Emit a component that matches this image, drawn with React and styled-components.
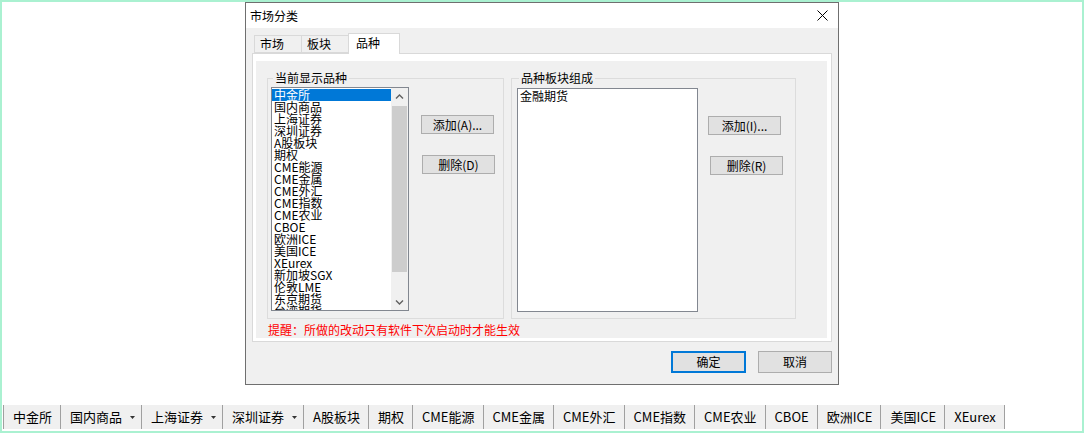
import styled, { createGlobalStyle } from "styled-components";

const GlobalStyle = createGlobalStyle`
  html, body {
    margin: 0;
    padding: 0;
    background: #fff;
  }
  * {
    box-sizing: border-box;
  }
`;

const leftItems = [
  "中金所",
  "国内商品",
  "上海证券",
  "深圳证券",
  "A股板块",
  "期权",
  "CME能源",
  "CME金属",
  "CME外汇",
  "CME指数",
  "CME农业",
  "CBOE",
  "欧洲ICE",
  "美国ICE",
  "XEurex",
  "新加坡SGX",
  "伦敦LME",
  "东京期货",
  "台湾期货",
];

const barItems = [
  { label: "中金所" },
  { label: "国内商品", drop: true },
  { label: "上海证券", drop: true },
  { label: "深圳证券", drop: true },
  { label: "A股板块" },
  { label: "期权" },
  { label: "CME能源" },
  { label: "CME金属" },
  { label: "CME外汇" },
  { label: "CME指数" },
  { label: "CME农业" },
  { label: "CBOE" },
  { label: "欧洲ICE" },
  { label: "美国ICE" },
  { label: "XEurex" },
];

const Chevron = ({ down }) => (
  <svg width="9" height="6" viewBox="0 0 9 6">
    <path
      d={down ? "M1 1.5 L4.5 5 L8 1.5" : "M1 4.5 L4.5 1 L8 4.5"}
      fill="none"
      stroke="#606060"
      strokeWidth="1.4"
    />
  </svg>
);

const ListBox = ({ items, selected, width, scroll }) => (
  <List $width={width}>
    <Items>
      {items.map((item, i) => (
        <Item key={item} $active={i === selected}>
          {item}
        </Item>
      ))}
    </Items>
    {scroll && (
      <ScrollBar>
        <ScrollBtn>
          <Chevron />
        </ScrollBtn>
        <Thumb />
        <Track />
        <ScrollBtn>
          <Chevron down />
        </ScrollBtn>
      </ScrollBar>
    )}
  </List>
);

const App = () => {
  return (
    <Frame>
      <GlobalStyle />
      <Dialog>
        <TitleBar>
          <span>市场分类</span>
          <svg width="11" height="11" viewBox="0 0 11 11">
            <path d="M0.5 0.5 L10.5 10.5 M10.5 0.5 L0.5 10.5" stroke="#000" strokeWidth="1" />
          </svg>
        </TitleBar>
        <Body>
          <TabStrip>
            <Tab>市场</Tab>
            <Tab>板块</Tab>
            <Tab $active>品种</Tab>
          </TabStrip>
          <TabPage>
            <Panel>
              <Groups>
                <Group $width={237} $padX={3} $padTop={2}>
                  <Legend>当前显示品种</Legend>
                  <GroupInner>
                    <ListBox items={leftItems} selected={0} width={138} scroll />
                    <BtnCol $offset={12}>
                      <Button $w={73}>添加(A)...</Button>
                      <Button $w={73} $shift={1}>删除(D)</Button>
                    </BtnCol>
                  </GroupInner>
                </Group>
                <Group $width={285} $padX={5} $padTop={3}>
                  <Legend>品种板块组成</Legend>
                  <GroupInner>
                    <ListBox items={["金融期货"]} selected={-1} width={181} />
                    <BtnCol $offset={10}>
                      <Button $w={73}>添加(I)...</Button>
                      <Button $w={73} $shift={2}>删除(R)</Button>
                    </BtnCol>
                  </GroupInner>
                </Group>
              </Groups>
              <Notice>提醒：所做的改动只有软件下次启动时才能生效</Notice>
            </Panel>
          </TabPage>
          <Footer>
            <Button $w={75} $h={22} $primary>确定</Button>
            <Button $w={74} $h={22}>取消</Button>
          </Footer>
        </Body>
      </Dialog>
      <Bar>
        {barItems.map((b) => (
          <BarItem key={b.label} $drop={b.drop}>
            {b.label}
            {b.drop && (
              <svg width="5" height="3" viewBox="0 0 5 3">
                <path d="M0 0 L5 0 L2.5 3 Z" fill="#333" />
              </svg>
            )}
          </BarItem>
        ))}
      </Bar>
    </Frame>
  );
};

export default App;

const Frame = styled.div`
  position: relative;
  width: 1084px;
  height: 433px;
  border: 2px solid #aaf1d1;
  background: #fff;
  display: flex;
  flex-direction: column;
  justify-content: flex-end;
  padding-bottom: 2px;
  overflow: hidden;
`;

const Dialog = styled.div`
  position: absolute;
  left: 243px;
  top: 0;
  width: 594px;
  height: 383px;
  border: 1px solid #6f6f6f;
  background: #f0f0f0;
  display: flex;
  flex-direction: column;
  font-family: "Noto Sans CJK SC", sans-serif;
  font-size: 12px;
  color: #000;
  z-index: 2;
`;

const TitleBar = styled.div`
  height: 25px;
  flex-shrink: 0;
  background: #fff;
  display: flex;
  align-items: center;
  justify-content: space-between;
  padding: 0 10px 0 4px;
  line-height: 14px;
`;

const Body = styled.div`
  flex: 1;
  display: flex;
  flex-direction: column;
  padding: 5px 6px 11px 6px;
`;

const TabStrip = styled.div`
  display: flex;
  align-items: flex-end;
  height: 20px;
  padding-left: 2px;
  position: relative;
  z-index: 1;
`;

const Tab = styled.div`
  width: ${(p) => (p.$active ? 52 : 48)}px;
  height: ${(p) => (p.$active ? 21 : 18)}px;
  margin-right: ${(p) => (p.$active ? 0 : -1)}px;
  margin-bottom: ${(p) => (p.$active ? -1 : 0)}px;
  padding-left: ${(p) => (p.$active ? 7 : 5)}px;
  padding-top: ${(p) => (p.$active ? 2 : 1)}px;
  border: 1px solid #d9d9d9;
  border-bottom: ${(p) => (p.$active ? "none" : "1px solid #d9d9d9")};
  background: ${(p) => (p.$active ? "#fff" : "#f0f0f0")};
  line-height: 14px;
`;

const TabPage = styled.div`
  height: 289px;
  border: 1px solid #d9d9d9;
  background: #fff;
  padding: 7px 4px 3px 3px;
  display: flex;
`;

const Panel = styled.div`
  flex: 1;
  background: #f0f0f0;
  padding: 10px 0 0 11px;
`;

const Groups = styled.div`
  display: flex;
  gap: 7px;
`;

const Group = styled.fieldset`
  margin: 0;
  min-width: 0;
  width: ${(p) => p.$width}px;
  height: 248px;
  border: 1px solid #dcdcdc;
  padding: ${(p) => p.$padTop}px ${(p) => p.$padX}px 0 ${(p) => p.$padX}px;
`;

const Legend = styled.legend`
  margin-left: 2px;
  padding: 0 2px;
  font-size: 12px;
  line-height: 14px;
`;

const GroupInner = styled.div`
  display: flex;
  align-items: flex-start;
`;

const List = styled.div`
  width: ${(p) => p.$width}px;
  height: 224px;
  border: 1px solid #828790;
  background: #fff;
  display: flex;
  overflow: hidden;
`;

const Items = styled.div`
  flex: 1;
  padding-top: 1px;
  overflow: hidden;
`;

const Item = styled.div`
  height: 12px;
  line-height: 12px;
  padding-left: 2px;
  white-space: nowrap;
  background: ${(p) => (p.$active ? "#0078d7" : "transparent")};
  color: ${(p) => (p.$active ? "#fff" : "#000")};
`;

const ScrollBar = styled.div`
  width: 17px;
  background: #f0f0f0;
  display: flex;
  flex-direction: column;
`;

const ScrollBtn = styled.div`
  height: 17px;
  display: flex;
  align-items: center;
  justify-content: center;
`;

const Thumb = styled.div`
  height: 166px;
  margin: 1px 1px 0 1px;
  background: #cdcdcd;
`;

const Track = styled.div`
  flex: 1;
`;

const BtnCol = styled.div`
  display: flex;
  flex-direction: column;
  gap: 21px;
  margin-left: ${(p) => p.$offset}px;
  padding-top: 28px;
`;

const Button = styled.div`
  width: ${(p) => p.$w}px;
  height: ${(p) => p.$h || 19}px;
  margin-left: ${(p) => p.$shift || 0}px;
  background: #e1e1e1;
  border: ${(p) => (p.$primary ? "2px solid #0078d7" : "1px solid #adadad")};
  display: flex;
  align-items: center;
  justify-content: center;
  line-height: 12px;
`;

const Notice = styled.div`
  margin-top: 5px;
  padding-left: 1px;
  color: #ff0000;
  line-height: 12px;
`;

const Footer = styled.div`
  display: flex;
  justify-content: flex-end;
  gap: 12px;
  margin-top: 9px;
  padding-right: 0;
`;

const Bar = styled.div`
  align-self: flex-start;
  display: flex;
  height: 24px;
  margin-left: 1px;
  background: #f0f0f0;
  border-left: 1px solid #a0a0a0;
  font-family: "Noto Sans CJK SC", sans-serif;
  font-size: 13px;
  color: #000;
`;

const BarItem = styled.div`
  display: flex;
  align-items: center;
  gap: 8px;
  padding: 0 ${(p) => (p.$drop ? 6 : 8)}px 0 9px;
  border-right: 1px solid #a0a0a0;
  white-space: nowrap;
  line-height: 16px;
`;
